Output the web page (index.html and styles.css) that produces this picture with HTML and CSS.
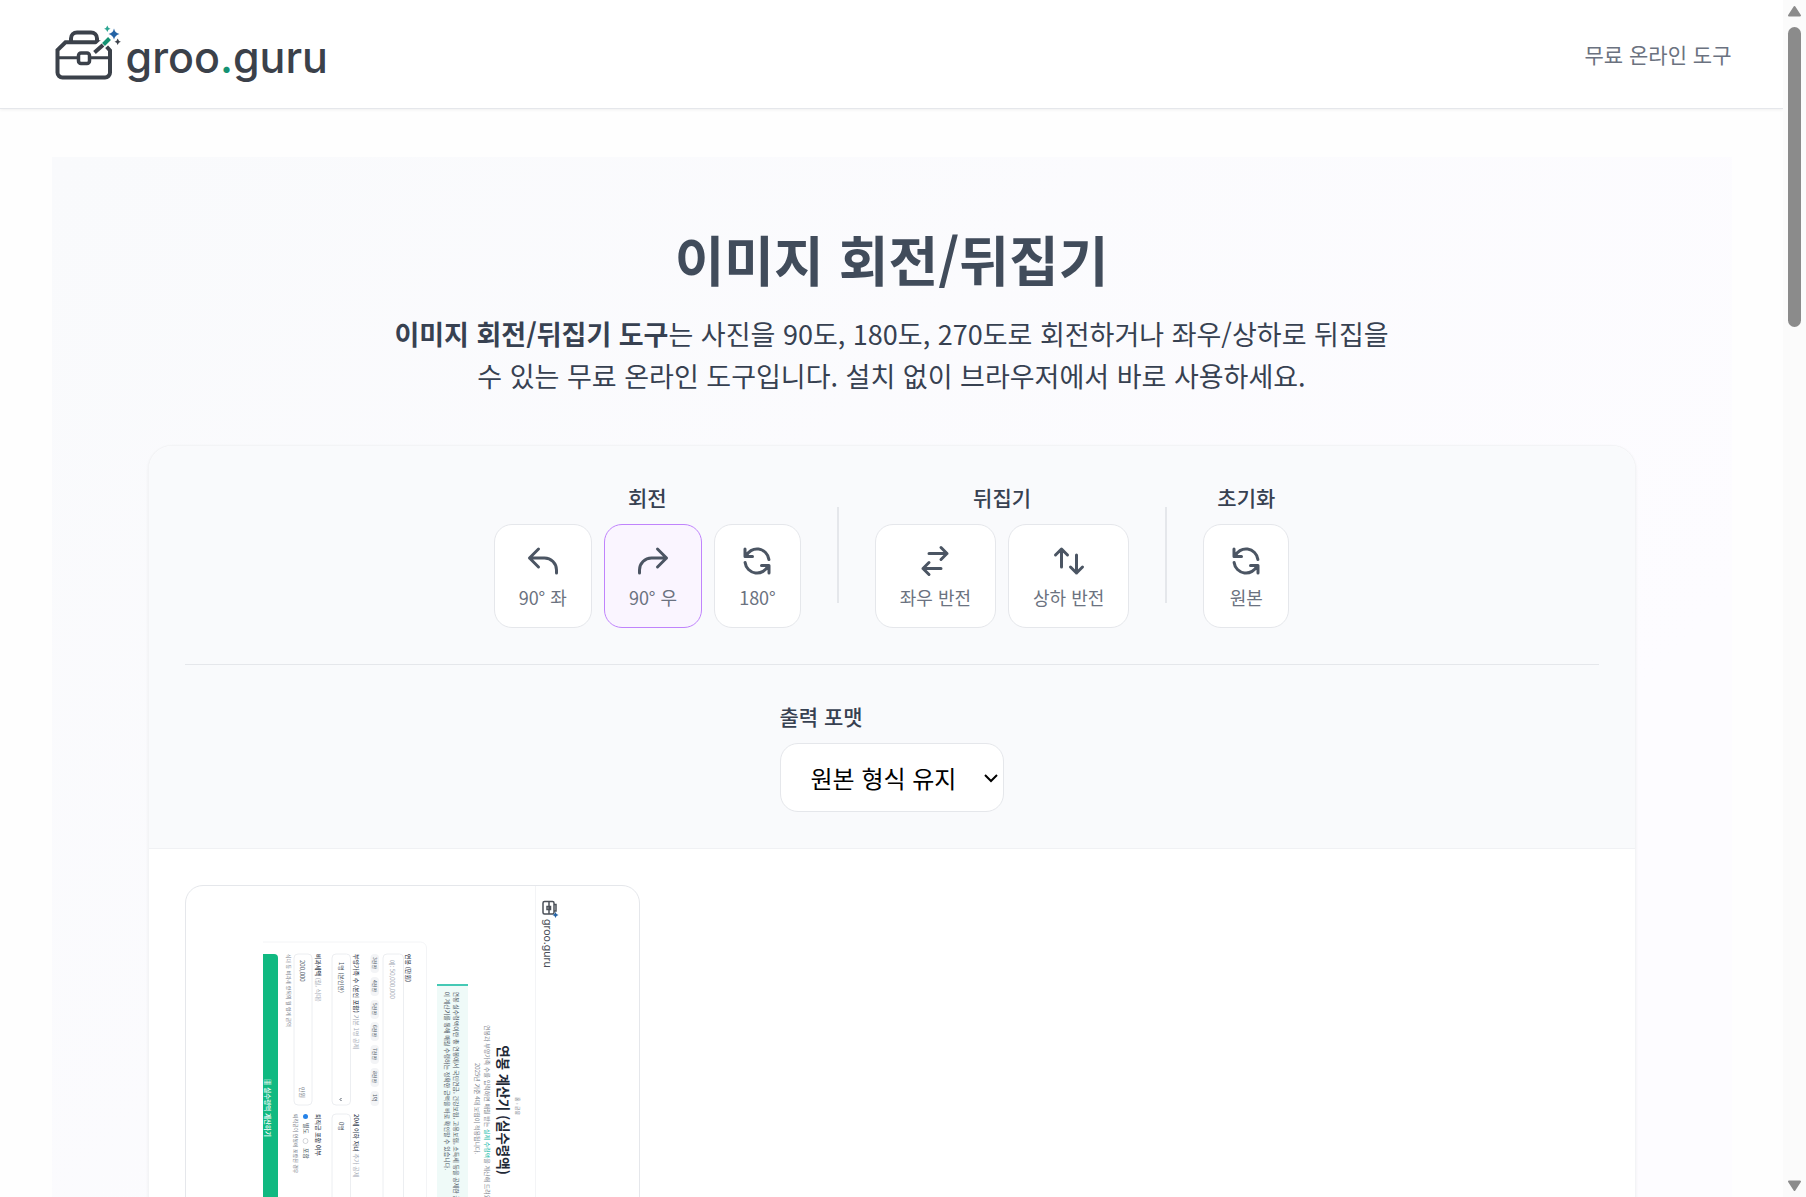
FILE: index.html
```html
<!DOCTYPE html>
<html lang="ko">
<head>
<meta charset="utf-8">
<meta name="viewport" content="width=device-width, initial-scale=1">
<title>이미지 회전/뒤집기 - groo.guru</title>
<link rel="stylesheet" href="styles.css">
</head>
<body>
<div class="app">
  <div class="page">
    <header class="header">
      <div class="header-inner">
        <a class="logo" href="#">
          <svg class="logo-icon" viewBox="0 0 74 72" fill="none" stroke="#3b414a" stroke-width="4" aria-hidden="true">
            <path d="M50 24.3H13.5L5.5 32V54.5a5 5 0 0 0 5 5H53a5 5 0 0 0 5-5V32.5L54 28"/>
            <path d="M19 24v-3.5a6 6 0 0 1 6-6h14a6 6 0 0 1 6 6V24"/>
            <path stroke-width="3" d="M5.5 39.7H26M38 39.7h20"/>
            <rect x="26.5" y="35" width="11" height="10.5" rx="2.5" stroke-width="3.5"/>
            <path stroke="#fff" stroke-width="9" d="M45 31.500 56 21.500"/>
            <path d="M42.500 34.5 51 27"/>
            <path stroke="#149272" d="M51.500 26.500 57.500 20.500"/>
            <path fill="#2463a5" stroke="none" d="M62 10.500q1 4.500 5.500 5.500q-4.500 1-5.500 5.500q-1-4.500-5.500-5.500q4.500-1 5.500-5.500z"/>
            <path fill="#2aa591" stroke="none" d="M55.300 7.500q.6 2.600 3.200 3.200q-2.600.6-3.200 3.200q-.6-2.600-3.200-3.200q2.600-.6 3.200-3.200z"/>
            <path fill="#3b414a" stroke="none" d="M65.700 20.500q.6 2.600 3.200 3.200q-2.600.6-3.200 3.200q-.6-2.600-3.200-3.200q2.600-.6 3.200-3.200z"/>
          </svg>
          <span class="logo-text">groo<span class="logo-dot">.</span>guru</span>
        </a>
        <span class="tagline">무료 온라인 도구</span>
      </div>
    </header>

    <main class="main">
      <h1 class="title">이미지 회전/뒤집기</h1>
      <p class="lead"><strong>이미지 회전/뒤집기 도구</strong>는 사진을 90도, 180도, 270도로 회전하거나 좌우/상하로 뒤집을 수 있는 무료 온라인 도구입니다. 설치 없이 브라우저에서 바로 사용하세요.</p>

      <section class="card">
        <div class="panel">
          <div class="tools">
            <div class="group" role="group" aria-labelledby="g-rotate">
              <span class="label" id="g-rotate">회전</span>
              <div class="buttons">
                <button class="tool" type="button"><svg class="icon" viewBox="0 0 24 24"><path d="M3 10h10a8 8 0 0 1 8 8v2M3 10l6 6m-6-6l6-6"/></svg>90° 좌</button>
                <button class="tool tool-active" type="button"><svg class="icon" viewBox="0 0 24 24"><path d="M21 10H11a8 8 0 0 0-8 8v2m18-10l-6 6m6-6l-6-6"/></svg>90° 우</button>
                <button class="tool" type="button"><svg class="icon" viewBox="0 0 24 24"><path d="M4 4v5h.582m15.356 2A8.001 8.001 0 0 0 4.582 9m0 0H9m11 11v-5h-.581m0 0a8.003 8.003 0 0 1-15.357-2m15.357 2H15"/></svg>180°</button>
              </div>
            </div>
            <div class="divider"></div>
            <div class="group" role="group" aria-labelledby="g-flip">
              <span class="label" id="g-flip">뒤집기</span>
              <div class="buttons">
                <button class="tool" type="button"><svg class="icon" viewBox="0 0 24 24"><path d="M8 7h12m0 0l-4-4m4 4l-4 4m0 6H4m0 0l4 4m-4-4l4-4"/></svg>좌우 반전</button>
                <button class="tool" type="button"><svg class="icon" viewBox="0 0 24 24"><path d="M7 16V4m0 0L3 8m4-4l4 4m6 0v12m0 0l4-4m-4 4l-4-4"/></svg>상하 반전</button>
              </div>
            </div>
            <div class="divider"></div>
            <div class="group" role="group" aria-labelledby="g-reset">
              <span class="label" id="g-reset">초기화</span>
              <div class="buttons">
                <button class="tool" type="button"><svg class="icon" viewBox="0 0 24 24"><path d="M4 4v5h.582m15.356 2A8.001 8.001 0 0 0 4.582 9m0 0H9m11 11v-5h-.581m0 0a8.003 8.003 0 0 1-15.357-2m15.357 2H15"/></svg>원본</button>
              </div>
            </div>
          </div>
          <div class="format">
            <div class="field">
              <label class="label" for="format">출력 포맷</label>
              <div class="select-wrap">
                <select class="select" id="format">
                  <option>원본 형식 유지</option>
                  <option>JPG</option>
                  <option>PNG</option>
                </select>
                <svg class="chevron" viewBox="0 0 14 10" aria-hidden="true"><path d="M1 2l6 6 6-6"/></svg>
              </div>
            </div>
          </div>
        </div>

        <div class="gallery">
          <figure class="item">
            <svg class="thumb" viewBox="0 0 598 1032" role="img" aria-label="미리보기">
              <g transform="translate(598 0) rotate(90)">
                <path class="t-line" d="M0 53H1032"/>
                <g fill="none" stroke="#4b5058" stroke-width="3">
                  <rect x="31" y="16" width="25" height="22" rx="3"/>
                  <path d="M37 16v-4h13v4M31 26h25M41 23h6v7h-6z"/>
                </g>
                <path fill="#2463a5" d="M58 7l2 4 4 2-4 2-2 4-2-4-4-2 4-2z"/>
                <text class="t-logo" x="66" y="36">groo.guru</text>
                <text class="t-grey t-small" x="422" y="93">홈 › 금융</text>
                <text class="t-title" x="448" y="129">연봉 계산기 (실수령액)</text>
                <text class="t-grey" x="278" y="155">연봉과 부양가족 수를 입력하면 매월 받는 <tspan class="t-teal">실제 수령액</tspan>을 계산해 드려요.</text>
                <text class="t-grey" x="354" y="174">2025년 기준 4대 보험이 적용됩니다.</text>
                <path fill="#effaf8" d="M196 188H1032v62H196z"/>
                <path fill="#45c9b5" d="M196 188h4v62h-4z"/>
                <text class="t-text" x="211" y="216">연봉 실수령액이란 총 연봉에서 국민연금, 건강보험, 고용보험, 소득세 등을 공제한 금액입니다.</text>
                <text class="t-text" x="211" y="235">이 계산기를 통해 매월 수령하는 정확한 금액을 바로 확인할 수 있습니다.</text>
                <path class="t-line" d="M112 620V283a12 12 0 0 1 12-12H900"/>
                <text class="t-strong" x="136" y="312">연봉 (만원)</text>
                <rect class="t-box" x="136" y="317" width="840" height="41" rx="8"/>
                <text class="t-faint" x="148" y="344">예: 50,000,000</text>
                <g class="t-chip">
                  <rect x="136" y="366" width="38" height="17" rx="8"/><rect x="182" y="366" width="38" height="17" rx="8"/><rect x="228" y="366" width="38" height="17" rx="8"/><rect x="272" y="366" width="38" height="17" rx="8"/><rect x="318" y="366" width="38" height="17" rx="8"/><rect x="364" y="366" width="38" height="17" rx="8"/><rect x="410" y="366" width="30" height="17" rx="8"/>
                </g>
                <g class="t-text">
                  <text class="t-small" x="142" y="379">3천만</text><text class="t-small" x="188" y="379">4천만</text><text class="t-small" x="234" y="379">5천만</text><text class="t-small" x="278" y="379">6천만</text><text class="t-small" x="324" y="379">7천만</text><text class="t-small" x="370" y="379">8천만</text><text class="t-small" x="416" y="379">1억</text>
                </g>
                <text class="t-strong" x="136" y="416">부양가족 수 (본인 포함) <tspan class="t-faint">기본 1명 공제</tspan></text>
                <text class="t-strong" x="456" y="416">20세 이하 자녀 <tspan class="t-faint">추가 공제</tspan></text>
                <rect class="t-box" x="136" y="423" width="302" height="37" rx="8"/>
                <rect class="t-box" x="456" y="423" width="302" height="37" rx="8"/>
                <text class="t-text" x="152" y="447">1명 (본인만)</text>
                <text class="t-text" x="472" y="447">0명</text>
                <path fill="none" stroke="#4b5563" stroke-width="2" d="M424 441l3 3 3-3"/>
                <text class="t-strong" x="136" y="492">비과세액 <tspan class="t-faint">(월, 식대)</tspan></text>
                <text class="t-strong" x="456" y="492">퇴직금 포함 여부</text>
                <rect class="t-box" x="136" y="500" width="302" height="36" rx="8"/>
                <text class="t-text" x="148" y="524">200,000</text>
                <text class="t-grey" x="402" y="524">만원</text>
                <circle cx="461" cy="513" r="5" fill="#2582e8"/>
                <text class="t-text" x="474" y="517">별도</text>
                <circle cx="510" cy="513" r="5" fill="none" stroke="#a8adb5"/>
                <text class="t-text" x="524" y="517">포함</text>
                <text class="t-grey t-small" x="456" y="536">퇴직금이 연봉에 포함된 경우</text>
                <text class="t-grey t-small" x="136" y="550">식대 등 비과세 항목의 월 합계 금액</text>
                <rect x="136" y="568" width="840" height="60" rx="8" fill="#10b981"/>
                <text class="t-button" x="386" y="594">▦ 실수령액 계산하기</text>
              </g>
            </svg>
          </figure>
        </div>
      </section>
    </main>
  </div>

  <div class="scrollbar" aria-hidden="true">
    <svg class="arrow" viewBox="0 0 15 12"><path d="M7.500 2 13 10.500H2z"/></svg>
    <div class="track"><div class="bar"></div></div>
    <svg class="arrow" viewBox="0 0 15 12"><path d="M7.500 10 13 1.500H2z"/></svg>
  </div>
</div>
</body>
</html>
```
FILE: styles.css
```css
* {
  box-sizing: border-box;
}

body {
  margin: 0;
  background: #fefefe;
  color: #374151;
  font-family: "Noto Sans CJK KR", "Noto Sans", sans-serif;
  font-size: 24px;
  line-height: 36px;
}

.app {
  display: flex;
  height: 100vh;
  overflow: hidden;
}

.page {
  flex: 1;
  min-width: 0;
  overflow: hidden;
}

.header {
  background: #fff;
  border-bottom: 1px solid #e5e7eb;
  box-shadow: 0 1px 3px rgba(0, 0, 0, 0.06);
}

.header-inner {
  display: flex;
  align-items: center;
  justify-content: space-between;
  max-width: 1680px;
  margin: 0 auto;
  padding: 18px 0;
}

.logo {
  display: flex;
  align-items: center;
  color: #3b414a;
  text-decoration: none;
}

.logo-icon {
  width: 74px;
  height: 72px;
}

.logo-text {
  padding-top: 6px;
  font-family: Inter, sans-serif;
  font-size: 43px;
  font-weight: 500;
  line-height: 48px;
}

.logo-dot {
  color: #149272;
}

.tagline {
  color: #6b7280;
  font-size: 21px;
  line-height: 30px;
}

.main {
  max-width: 1680px;
  margin: 48px auto 0;
  padding: 72px 96px;
  background: linear-gradient(135deg, #f9fafc, #fdfcff 70%);
}

.title {
  margin: 0 0 24px;
  color: #414c5b;
  font-size: 54px;
  font-weight: 700;
  line-height: 60px;
  text-align: center;
}

.lead {
  max-width: 1008px;
  margin: 0 auto 48px;
  font-size: 27px;
  line-height: 42px;
  text-align: center;
}

.card {
  overflow: hidden;
  background: #fff;
  border: 1px solid #f3f4f6;
  border-radius: 24px;
  box-shadow: 0 1px 3px rgba(0, 0, 0, 0.06);
}

.panel {
  padding: 36px;
  background: #f9fafc;
  border-bottom: 1px solid #f0f1f4;
}

.tools {
  display: flex;
  flex-wrap: wrap;
  align-items: center;
  justify-content: center;
  gap: 36px;
  padding-bottom: 36px;
  border-bottom: 1px solid #e5e7eb;
}

.group {
  display: flex;
  flex-direction: column;
  align-items: center;
  gap: 12px;
}

.label {
  font-size: 21px;
  font-weight: 500;
  line-height: 30px;
}

.buttons {
  display: flex;
  gap: 12px;
}

.tool {
  display: flex;
  flex-direction: column;
  align-items: center;
  gap: 6px;
  padding: 18px 24px;
  background: #fff;
  border: 1px solid #e5e7eb;
  border-radius: 18px;
  color: #6b7280;
  font-family: inherit;
  font-size: 18px;
  line-height: 24px;
}

.tool-active {
  background: #faf5ff;
  border-color: #c084fc;
}

.icon {
  width: 36px;
  height: 36px;
  fill: none;
  stroke: #4b5563;
  stroke-width: 2;
  stroke-linecap: round;
  stroke-linejoin: round;
}

.divider {
  width: 2px;
  height: 96px;
  background: #e5e7eb;
}

.format {
  display: flex;
  justify-content: center;
  padding-top: 36px;
}

.field {
  display: flex;
  flex-direction: column;
  gap: 12px;
}

.select-wrap {
  display: grid;
  align-items: center;
}

.select {
  grid-area: 1 / 1;
  height: 69px;
  width: 224px;
  padding: 0 30px;
  appearance: none;
  background: #fff;
  border: 1px solid #e5e7eb;
  border-radius: 18px;
  color: #000;
  font-family: inherit;
  font-size: 24px;
}

.chevron {
  grid-area: 1 / 1;
  justify-self: end;
  width: 14px;
  height: 10px;
  margin-right: 6px;
  fill: none;
  stroke: #000;
  stroke-width: 2;
  pointer-events: none;
}

.gallery {
  display: grid;
  grid-template-columns: repeat(3, 1fr);
  gap: 24px;
  padding: 36px;
}

.item {
  display: flex;
  justify-content: center;
  margin: 0;
  overflow: hidden;
  background: #fff;
  border: 1px solid #e5e7eb;
  border-radius: 18px;
}

.thumb {
  width: 299px;
  height: 516px;
}

.thumb text {
  font-size: 12px;
}

.thumb .t-small {
  font-size: 10px;
}

.thumb .t-button {
  fill: #fff;
  font-size: 13px;
  font-weight: 500;
}

.thumb .t-title {
  fill: #1f2937;
  font-size: 27px;
  font-weight: 700;
  text-anchor: middle;
}

.thumb .t-logo {
  fill: #4b5058;
  font-family: Inter, sans-serif;
  font-size: 21px;
}

.t-grey {
  fill: #7b818c;
}

.t-text {
  fill: #4b5563;
}

.t-strong {
  fill: #374151;
  font-weight: 500;
}

.t-faint {
  fill: #a3a9b5;
  font-weight: 400;
}

.t-teal {
  fill: #14b8a6;
}

.t-chip {
  fill: #f3f4f6;
}

.t-box {
  fill: none;
  stroke: #eceef1;
  stroke-width: 2;
}

.t-line {
  fill: none;
  stroke: #f3f4f6;
  stroke-width: 2;
}

.scrollbar {
  display: flex;
  flex: 0 0 23px;
  flex-direction: column;
  align-items: center;
  padding: 5px 0;
  background: #fbfbfb;
}

.arrow {
  width: 15px;
  height: 12px;
  fill: #8b8b8b;
  stroke: #8b8b8b;
  stroke-width: 2;
  stroke-linejoin: round;
}

.track {
  flex: 1;
  padding: 10px 0;
}

.bar {
  width: 13px;
  height: 300px;
  border-radius: 7px;
  background: #8b8b8b;
}
```
